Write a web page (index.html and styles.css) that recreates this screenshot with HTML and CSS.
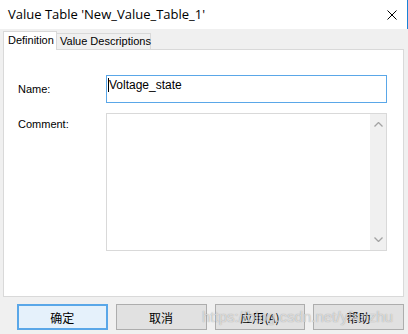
FILE: index.html
```html
<!DOCTYPE html>
<html lang="en">
<head>
  <meta charset="UTF-8" />
  <title>Value Table</title>
  <link rel="stylesheet" href="styles.css">
</head>
<body>

  <!-- Title bar -->
  <div class="titlebar">
    <span class="title">Value Table 'New_Value_Table_1'</span>
    <svg class="close" viewBox="0 0 10 10"><path d="M0.5 0.5L9.5 9.5M9.5 0.5L0.5 9.5" /></svg>
  </div>

  <div class="dialog">
    <!-- Tabs -->
    <div class="tabs">
      <div class="tab active">Definition</div>
      <div class="tab">Value Descriptions</div>
    </div>

    <div class="panel">
      <div class="row">
        <label class="label">Name:</label>
        <div class="input"><span class="caret"></span>Voltage_state</div>
      </div>
      <div class="row">
        <label class="label label-top">Comment:</label>
        <div class="textarea">
          <div class="scrollbar">
            <svg viewBox="0 0 9 5"><path d="M0.5 4.5L4.5 0.5L8.5 4.5" /></svg>
            <svg viewBox="0 0 9 5"><path d="M0.5 0.5L4.5 4.5L8.5 0.5" /></svg>
          </div>
        </div>
      </div>
    </div>

    <!-- Buttons -->
    <div class="buttons">
      <button class="btn default">确定</button>
      <button class="btn">取消</button>
      <button class="btn">应用(A)</button>
      <button class="btn">帮助</button>
    </div>

    <div class="watermark">https://blog.csdn.net/yfanzhu</div>
  </div>

</body>
</html>
```

FILE: styles.css
```css
html, body {
  margin: 0;
  padding: 0;
  width: 408px;
  height: 334px;
  overflow: hidden;
  background: #f0f0f0;
  font-family: 'Liberation Sans', 'Noto Sans CJK SC', sans-serif;
  color: #000;
}

.titlebar {
  height: 29px;
  background: #fff;
  border-right: 1px solid #1883d7;
  display: flex;
  align-items: center;
  justify-content: space-between;
  padding: 0 10px 0 8px;
  box-sizing: border-box;
}

.title {
  font-family: 'Open Sans', sans-serif;
  font-size: 13px;
  margin-top: -1px;
}

.close {
  width: 10px;
  height: 10px;
  margin-top: 1px;
  stroke: #000;
  stroke-width: 1;
  fill: none;
}

.dialog {
  position: relative;
  height: 305px;
  padding: 2px 4px 0 3px;
  box-sizing: border-box;
}

.tabs {
  display: flex;
  align-items: flex-end;
  height: 18px;
  position: relative;
  z-index: 1;
}

.tab {
  font-size: 11px;
  height: 16px;
  line-height: 15px;
  padding: 0 3px;
  border: 1px solid #d9d9d9;
  border-bottom: none;
  background: #f0f0f0;
  color: #000;
  box-sizing: border-box;
  white-space: nowrap;
}

.tab.active {
  height: 19px;
  line-height: 17px;
  background: #fff;
  width: 54px;
  margin-bottom: -1px;
  padding: 0 4px;
}

.tab + .tab {
  border-left: none;
  width: 94px;
}

.panel {
  height: 248px;
  background: #fff;
  border: 1px solid #d9d9d9;
  box-sizing: border-box;
  padding: 25px 16px 0 14px;
  display: flex;
  flex-direction: column;
  gap: 10px;
}

.row {
  display: flex;
  align-items: center;
}

.label {
  width: 88px;
  font-size: 11px;
  color: #000;
}

.label-top {
  align-self: flex-start;
  padding-top: 5px;
}

.input {
  flex: 1;
  height: 28px;
  border: 1px solid #5aa7e8;
  box-sizing: border-box;
  font-size: 12px;
  padding: 2px 0 0 1px;
  display: flex;
  align-items: flex-start;
}

.caret {
  width: 1px;
  height: 14px;
  background: #000;
}

.textarea {
  flex: 1;
  height: 138px;
  border: 1px solid #d9d9d9;
  box-sizing: border-box;
  display: flex;
  justify-content: flex-end;
}

.scrollbar {
  width: 16px;
  background: #f0f0f0;
  display: flex;
  flex-direction: column;
  justify-content: space-between;
  align-items: center;
  padding: 8px 0;
}

.scrollbar svg {
  width: 9px;
  height: 5px;
  stroke: #a3a3a3;
  stroke-width: 1.3;
  fill: none;
}

.buttons {
  display: flex;
  gap: 8px;
  padding: 7px 0 0 14px;
}

.btn {
  width: 91px;
  height: 26px;
  font-family: 'Noto Sans CJK SC', sans-serif;
  font-size: 12px;
  background: #e1e1e1;
  border: 1px solid #adadad;
  color: #000;
  padding: 0;
}

.btn.default {
  background: #e5f1fb;
  border: 2px solid #5aa7e8;
}

.watermark {
  position: absolute;
  left: 202px;
  top: 279px;
  font-family: 'Liberation Sans', sans-serif;
  font-size: 15px;
  color: rgba(255, 255, 255, 0.6);
  text-shadow: 0 0 1px rgba(110, 110, 110, 0.7);
  white-space: nowrap;
  pointer-events: none;
}
```
